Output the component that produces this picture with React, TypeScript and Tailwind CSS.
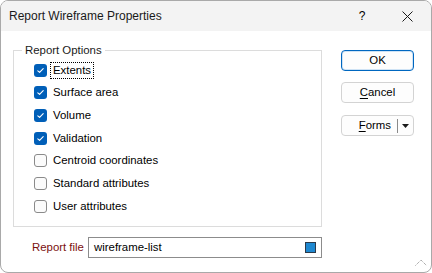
import { useState } from "react";

const options = [
	{ label: "Extents", checked: true, focus: true },
	{ label: "Surface area", checked: true },
	{ label: "Volume", checked: true },
	{ label: "Validation", checked: true },
	{ label: "Centroid coordinates", checked: false },
	{ label: "Standard attributes", checked: false },
	{ label: "User attributes", checked: false },
];

const CheckBox = ({ checked }: { checked: boolean }) =>
	checked ? (
		<span className="w-[13px] h-[13px] rounded-[3px] bg-[#005fb8] flex items-center justify-center shrink-0">
			<svg width="9" height="9" viewBox="0 0 9 9">
				<path d="M1.8 4.8 L3.6 6.4 L7.2 2.6" stroke="white" strokeWidth="1.1" fill="none" strokeLinecap="round" strokeLinejoin="round" />
			</svg>
		</span>
	) : (
		<span className="w-[13px] h-[13px] rounded-[3px] border border-[#8a8a8a] bg-[#fbfbfb] shrink-0" />
	);

const App = () => {
	const [checks, setChecks] = useState(options.map((o) => o.checked));

	return (
		<div className="w-[432px] h-[273px] bg-white border border-[#a9a9a9] rounded-[8px] overflow-hidden flex flex-col text-[11.4px] text-black font-['Liberation_Sans',Arial,sans-serif]">
			{/* title bar */}
			<div className="h-[30px] bg-[#f3f3f3] flex items-center shrink-0">
				<div className="pl-[8px] flex-1 text-[12px] text-[#1a1a1a]">Report Wireframe Properties</div>
				<div className="w-[20px] text-center text-[12px] mr-[27px]">?</div>
				<div className="w-[16px] flex justify-center mr-[16px]">
					<svg width="11" height="11" viewBox="0 0 11 11">
						<path d="M0.5 0.5 L10.5 10.5 M10.5 0.5 L0.5 10.5" stroke="#1a1a1a" strokeWidth="1" />
					</svg>
				</div>
			</div>

			{/* body */}
			<div className="flex flex-1 relative">
				<div className="flex flex-col pl-[12px]">
					<fieldset className="mt-[11px] w-[309px] border border-[#dcdcdc] pl-[20px] pb-[8px] pt-[1px]">
						<legend className="-ml-[12px] px-[3px] h-[16px] leading-[16px] text-[#1a1a1a]">Report Options</legend>
						{options.map((o, i) => (
							<div
								key={o.label}
								className="h-[22.67px] flex items-center cursor-default"
								onClick={() => setChecks((prev) => prev.map((c, j) => (j === i ? !c : c)))}
							>
								<CheckBox checked={checks[i]} />
								<span
									className={
										o.focus
											? "ml-[3px] px-[2px] leading-[15px] border border-dotted border-black"
											: "ml-[6px] leading-[15px]"
									}
								>
									{o.label}
								</span>
							</div>
						))}
					</fieldset>
					<div className="flex items-center mt-[10px]">
						<span className="w-[75px] pl-[19px] text-[#7b1010]">Report file</span>
						<div className="w-[234px] h-[21px] border border-[#8c8c8c] flex items-center pl-[5px] pr-[5px]">
							<span className="flex-1">wireframe-list</span>
							<span className="w-[11px] h-[11px] bg-[#1e88d0] border border-[#2b3a4a]" />
						</div>
					</div>
				</div>

				<div className="flex flex-col ml-[19px] mt-[19px] gap-[11px]">
					<button className="w-[73px] h-[21px] rounded-[4px] border border-[#0067c0] bg-[#fdfdfd] shadow-[inset_0_0_0_1px_#cfe3f5] text-center">
						OK
					</button>
					<button className="w-[73px] h-[21px] rounded-[4px] border border-[#d3d3d3] bg-[#fdfdfd] text-center">
						<span className="underline underline-offset-2">C</span>ancel
					</button>
					<button className="w-[73px] h-[21px] mt-[1px] rounded-[4px] border border-[#d3d3d3] bg-[#fdfdfd] flex items-center">
						<span className="flex-1 text-right pr-[6px]">
							<span className="underline underline-offset-2">F</span>orms
						</span>
						<span className="w-px h-[14px] bg-[#8a8a8a]" />
						<span className="w-[15px] flex justify-center">
							<svg width="7" height="4" viewBox="0 0 7 4">
								<path d="M0 0 L7 0 L3.5 4 Z" fill="#1a1a1a" />
							</svg>
						</span>
					</button>
				</div>

				{/* resize grip */}
				<svg className="absolute right-[4px] bottom-[6px]" width="12" height="7" viewBox="0 0 12 7">
					<path d="M0.5 6.5 L6 1 L11.5 6.5" stroke="#8a8a8a" strokeWidth="1" fill="none" strokeDasharray="1 1" />
				</svg>
			</div>
		</div>
	);
};

export default App;
